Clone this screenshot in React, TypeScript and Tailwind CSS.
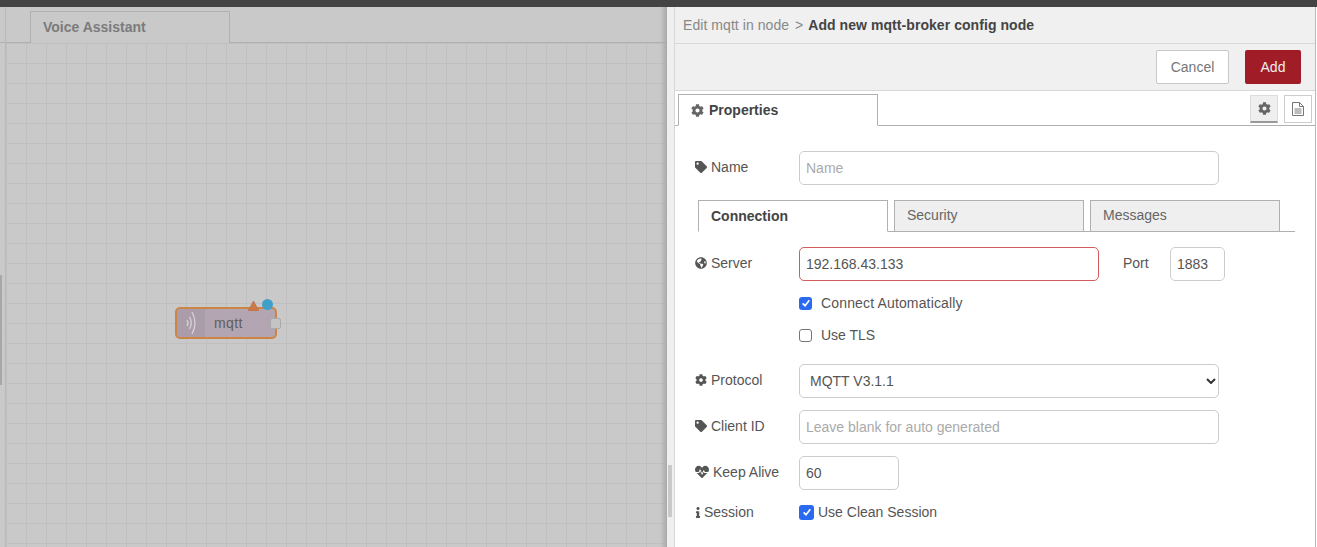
import React from 'react';
import { FaCog, FaTag, FaGlobeAmericas, FaHeartbeat, FaInfo } from 'react-icons/fa';

const Check = ({ size }: { size: string }) => (
  <span className={`${size} flex items-center justify-center rounded-[3px] bg-[#2a6af0]`}>
    <svg viewBox="0 0 12 12" className="w-[10px] h-[10px]" fill="none" stroke="#fff" strokeWidth="2">
      <path d="M2 6.5 L4.8 9.2 L10 2.8" />
    </svg>
  </span>
);

const Label = ({ icon, text, gap }: { icon: React.ReactNode; text: string; gap: string }) => (
  <div className={`w-[104px] pb-[2px] flex items-center ${gap} text-[14px] text-[#555]`}>
    {icon}
    <span>{text}</span>
  </div>
);

const inputCls = 'h-[34px] border border-[#ccc] rounded-[5px] px-[6px] text-[14px] text-[#555] bg-white outline-none placeholder:text-[#aaa]';

const Canvas = () => (
  <div className="relative w-[667px] shrink-0 bg-[#c9c9c9] overflow-hidden">
    <div className="h-[36px] flex items-end border-b border-[#b0b0b0] pl-[30px] relative">
      <div className="w-[200px] h-[32px] -mb-px border border-[#b0b0b0] border-b-0 bg-[#c9c9c9] px-[12px] pt-[5px] text-[14px] font-bold text-[#7b7b7b]">
        Voice Assistant
      </div>
    </div>
    <div className="absolute left-[5px] top-0 bottom-0 w-px bg-[#b9b9b9]" />
    <div className="absolute left-0 top-[268px] w-[2px] h-[110px] bg-[#a8a8a8]" />
    <div className="h-[504px] ml-[6px] bg-[linear-gradient(#c0c0c0_1px,transparent_1px),linear-gradient(90deg,#c0c0c0_1px,transparent_1px)] bg-[size:20px_20px]" />
    {/* panel shadow */}
    <div className="absolute right-0 top-0 bottom-0 w-[7px] bg-gradient-to-r from-transparent to-[#a9a9a9]" />

    {/* node */}
    <div className="absolute left-[175px] top-[300px] w-[102px] h-[32px] rounded-[5px] border-2 border-[#cd8545] bg-[#b3a5b1] flex items-center">
      <div className="w-[28px] h-full bg-[#aa9da9] rounded-l-[3px] flex items-center justify-center">
        <svg viewBox="0 0 10 24" className="w-[10px] h-[24px] mr-[1px]" fill="none" stroke="#dad5d9" strokeWidth="1.2">
          <path d="M1 9 Q3 12 1 15" />
          <path d="M3.5 6 Q7 12 3.5 18" />
          <path d="M6 1 Q12 12 6 23" />
        </svg>
      </div>
      <span className="ml-[9px] text-[14px] tracking-[0.4px] text-[#5f5f5f]">mqtt</span>
      <div className="absolute -right-[6px] top-[9px] w-[11px] h-[11px] rounded-[2px] bg-[#c4c4c4] border border-[#aaa]" />
      <svg viewBox="0 0 11 10" className="absolute left-[71px] -top-[8px] w-[11px] h-[10px]">
        <path d="M5.5 0 L11 10 L0 10 Z" fill="#cc7a45" stroke="#b5604a" strokeWidth="0.5" />
      </svg>
      <div className="absolute left-[85px] -top-[10px] w-[11px] h-[11px] rounded-full bg-[#3f9fc9]" />
    </div>
  </div>
);

const Tab = ({ text, active }: { text: string; active?: boolean }) =>
  active ? (
    <div className="w-[190px] h-[32px] -mb-px border border-[#b0b0b0] border-b-white bg-white px-[12px] pt-[5px] text-[14px] font-bold text-[#444]">
      {text}
    </div>
  ) : (
    <div className="w-[190px] h-[31px] border border-[#b0b0b0] border-b-0 bg-[#efefef] px-[12px] pt-[4px] text-[14px] text-[#666]">
      {text}
    </div>
  );

const Panel = () => (
  <div className="flex-1 flex min-w-0">
    <div className="relative w-[8px] bg-[#efefef] border-r border-[#d8d8d8]">
      <div className="absolute left-[1px] top-[458px] w-[4px] h-[52px] bg-[#c9c9c9]" />
    </div>
    <div className="flex-1 min-w-0 border-r border-[#b9b9b9]">
      <div className="h-[37px] bg-[#f0f0f0] border-b border-[#d8d8d8] pl-[8px] flex items-center text-[14px] text-[#888]">
        <span className="tracking-[0.06px]">Edit mqtt in node</span>
        <span className="ml-[6px]">&gt;</span>
        <span className="ml-[5px] font-bold tracking-[0.06px] text-[#444]">Add new mqtt-broker config node</span>
      </div>
      <div className="h-[47px] bg-[#f0f0f0] border-b border-[#d8d8d8] flex items-center justify-end gap-[16px] pr-[14px]">
        <div className="w-[73px] h-[34px] bg-white border border-[#c8c8c8] rounded-[2px] flex items-center justify-center text-[14px] text-[#777]">Cancel</div>
        <div className="w-[56px] h-[34px] bg-[#a01c26] rounded-[2px] flex items-center justify-center text-[14px] text-[#eee]">Add</div>
      </div>
      <div className="h-[35px] flex items-end border-b border-[#b0b0b0] pl-[3px] relative">
        <div className="w-[200px] h-[32px] -mb-px border border-[#b0b0b0] border-b-white bg-white px-[12px] flex items-center gap-[5px] text-[14px] font-bold text-[#444]">
          <FaCog className="w-[13px] h-[13px] text-[#666]" />
          Properties
        </div>
        <div className="ml-auto flex gap-[6px] pr-[3px] pb-[2px]">
          <div className="w-[28px] h-[28px] bg-[#efefef] border border-[#ddd] border-b-2 border-b-[#999] flex items-center justify-center">
            <FaCog className="w-[13px] h-[13px] text-[#666]" />
          </div>
          <div className="w-[28px] h-[28px] bg-white border border-[#ccc] flex items-center justify-center">
            <svg viewBox="0 0 12 14" className="w-[12px] h-[14px]" fill="none" stroke="#666" strokeWidth="0.9">
              <path d="M0.5 0.5 H7.5 L11.5 4.5 V13.5 H0.5 Z" />
              <path d="M7.5 0.5 V4.5 H11.5" />
              <path d="M2.5 7 H9.5 M2.5 9 H9.5 M2.5 11 H9.5" />
            </svg>
          </div>
        </div>
      </div>

      <div className="pl-[20px]">
        <div className="mt-[25px] flex items-center">
          <Label gap="gap-[4px]" text="Name" icon={<FaTag className="w-[12px] h-[12px] text-[#555]" />} />
          <input className={`${inputCls} w-[420px]`} placeholder="Name" readOnly />
        </div>

        <div className="mt-[15px] ml-[3px] w-[597px] flex gap-[6px] border-b border-[#b0b0b0]">
          <Tab text="Connection" active />
          <Tab text="Security" />
          <Tab text="Messages" />
        </div>

        <div className="mt-[15px] flex items-center">
          <Label gap="gap-[4px]" text="Server" icon={<FaGlobeAmericas className="w-[12px] h-[12px] text-[#555]" />} />
          <input className={`${inputCls} w-[300px] border-[#d25c5c]`} value="192.168.43.133" readOnly />
          <span className="ml-[24px] w-[47px] pb-[2px] text-[14px] text-[#555]">Port</span>
          <input className={`${inputCls} w-[55px]`} value="1883" readOnly />
        </div>

        <div className="mt-[14px] ml-[104px] h-[16px] flex items-center gap-[9px] text-[14px] text-[#555]">
          <Check size="w-[13px] h-[13px]" />
          <span className="tracking-[0.15px]">Connect Automatically</span>
        </div>
        <div className="mt-[16px] ml-[104px] h-[16px] flex items-center gap-[9px] text-[14px] text-[#555]">
          <span className="w-[13px] h-[13px] rounded-[3px] border border-[#777] bg-white" />
          Use TLS
        </div>

        <div className="mt-[21px] flex items-center">
          <Label gap="gap-[4px]" text="Protocol" icon={<FaCog className="w-[12px] h-[12px] text-[#555]" />} />
          <div className={`${inputCls} w-[420px] flex items-center justify-between pl-[10px] pr-[2px]`}>
            MQTT V3.1.1
            <svg viewBox="0 0 10 6" className="w-[10px] h-[6px]" fill="none" stroke="#333" strokeWidth="2">
              <path d="M1 1 L5 5 L9 1" />
            </svg>
          </div>
        </div>

        <div className="mt-[12px] flex items-center">
          <Label gap="gap-[4px]" text="Client ID" icon={<FaTag className="w-[12px] h-[12px] text-[#555]" />} />
          <input className={`${inputCls} w-[420px]`} placeholder="Leave blank for auto generated" readOnly />
        </div>

        <div className="mt-[12px] flex items-center">
          <Label gap="gap-[4px]" text="Keep Alive" icon={<FaHeartbeat className="w-[14px] h-[14px] text-[#555]" />} />
          <input className={`${inputCls} w-[100px]`} value="60" readOnly />
        </div>

        <div className="mt-[15px] h-[16px] flex items-center">
          <Label gap="gap-[3px]" text="Session" icon={<FaInfo className="w-[6px] h-[11px] text-[#555]" />} />
          <div className="flex items-center gap-[4px] pb-[2px] text-[14px] text-[#555]">
            <Check size="w-[15px] h-[15px]" />
            Use Clean Session
          </div>
        </div>
      </div>
    </div>
    <div className="w-px bg-white" />
  </div>
);

export default function App() {
  return (
    <div className="w-[1317px] h-[547px] overflow-hidden flex flex-col bg-white font-['Liberation_Sans',Arial,sans-serif]">
      <div className="h-[7px] bg-[#444] shrink-0" />
      <div className="flex-1 flex min-h-0">
        <Canvas />
        <Panel />
      </div>
    </div>
  );
}
